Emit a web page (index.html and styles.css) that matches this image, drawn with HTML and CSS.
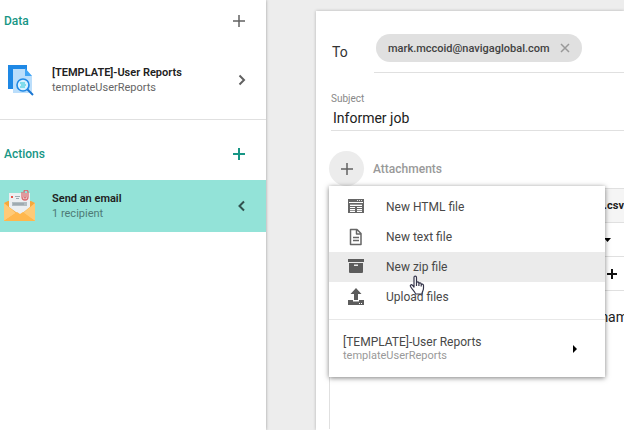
FILE: index.html
```html
<!DOCTYPE html>
<html lang="en">
<head>
<meta charset="utf-8">
<meta name="viewport" content="width=device-width, initial-scale=1">
<title>Informer job</title>
<link rel="stylesheet" href="styles.css">
</head>
<body>
<div class="app">
  <aside class="sidebar">
    <section class="section">
      <header class="section-head">
        <h2>Data</h2>
        <button class="icon-btn" type="button" aria-label="Add data"><svg width="14" height="14" viewBox="0 0 14 14"><path d="M7 1v12M1 7h12"/></svg></button>
      </header>
      <a class="item" href="#">
        <svg class="item-icon" width="32" height="32" viewBox="0 0 32 32">
          <path fill="#1e88e5" d="M4 1h19v24H4z"/>
          <path fill="#bbdefb" d="M9 5h12l7 7v17H9z"/>
          <path fill="#42a5f5" d="M21 4v8h7z"/>
          <circle cx="19" cy="21" r="6" fill="#d9f2ff" stroke="#1e88e5" stroke-width="1.600"/>
          <path d="M16 19h5M17 21h5M16 23h5" stroke="#26c6da" stroke-width="1.100"/>
          <path d="M23.500 25.500L29 31" stroke="#1976d2" stroke-width="2"/>
        </svg>
        <span class="item-text"><strong>[TEMPLATE]-User Reports</strong><small>templateUserReports</small></span>
        <svg class="chevron" width="8" height="12" viewBox="0 0 8 12"><path d="M1.500 1.500L6 6l-4.500 4.500"/></svg>
      </a>
    </section>
    <section class="section actions">
      <header class="section-head">
        <h2>Actions</h2>
        <button class="icon-btn" type="button" aria-label="Add action"><svg width="14" height="14" viewBox="0 0 14 14"><path d="M7 1v12M1 7h12"/></svg></button>
      </header>
      <a class="item selected" href="#">
        <svg class="item-icon" width="32" height="32" viewBox="0 0 32 32">
          <path fill="#f5a93c" d="M0 13l4-2h23l4 2v18H0z"/>
          <path fill="#eceff1" d="M5 3h21v14l-10 8L5 17z"/>
          <path fill="#ffca76" d="M0 13l12 10L0 31zM31 13L19 23l12 8z"/>
          <path fill="#ffb74d" d="M0 31l13-9 3 2 3-2 12 9z"/>
          <path fill="#e65349" d="M7 6h2v2H7z"/>
          <path d="M11 6.500h5M12 8.500h3" stroke="#9eabb2"/>
          <path fill="#b3bdc2" d="M8 12h15v4H8z"/>
          <path d="M9 14h11" stroke="#8b989f"/>
          <path fill="none" stroke="#dc6b70" stroke-width="1.300" d="M18 2v5a3 3 0 0 0 6 0V2a2 2 0 0 0-4 0v5a1 1 0 0 0 2 0V3"/>
        </svg>
        <span class="item-text"><strong>Send an email</strong><small>1 recipient</small></span>
        <svg class="chevron" width="8" height="12" viewBox="0 0 8 12"><path d="M6 1.500L1.500 6 6 10.500"/></svg>
      </a>
    </section>
  </aside>

  <main class="main">
    <form class="card">
      <div class="to-row">
        <span class="to-label">To</span>
        <div class="recipients">
          <span class="chip">mark.mccoid@navigaglobal.com<button type="button" aria-label="Remove recipient"><svg width="10" height="10" viewBox="0 0 10 10"><path d="M1 1l8 8M9 1L1 9"/></svg></button></span>
        </div>
      </div>
      <div class="subject">
        <label for="subject">Subject</label>
        <input id="subject" type="text" value="Informer job">
      </div>
      <div class="attachments">
        <button class="round-btn" type="button" aria-label="Add attachment"><svg width="14" height="14" viewBox="0 0 14 14"><path d="M7 1v12M1 7h12"/></svg></button>
        <span class="attachments-label">Attachments</span>
        <div class="menu" role="menu">
          <div class="menu-list">
            <button class="menu-item" type="button" role="menuitem">
              <svg width="18" height="18" viewBox="0 0 18 18"><path fill="#666" fill-rule="evenodd" d="M1 1h16v14H1zM2 4v1h14V4zM3 6v2h12V6zM3 9v1h5V9zM3 11v3h5v-3zM10 9v1h5V9zM10 11v3h5v-3z"/><path fill="#999" d="M3 6h12v1H3zM3 12h5v1H3zM10 12h5v1h-5z"/><path fill="#ddd" d="M10 2h1v1h-1zM12 2h1v1h-1zM14 2h1v1h-1z"/></svg>
              New HTML file
            </button>
            <button class="menu-item" type="button" role="menuitem">
              <svg width="18" height="18" viewBox="0 0 18 18"><path fill="none" stroke="#666" stroke-width="1.500" stroke-linejoin="round" d="M4 1.500h6l4 4v11H3.500v-15zM9.500 1.500V6H14M6 9.500h6M6 12.500h6"/></svg>
              New text file
            </button>
            <button class="menu-item active" type="button" role="menuitem">
              <svg width="18" height="18" viewBox="0 0 18 18"><path fill="#5c5c5c" fill-rule="evenodd" d="M1 1h16v3H1zM2 5h14v9a1 1 0 0 1-1 1H3a1 1 0 0 1-1-1zM7 6.500V8h4V6.500z"/></svg>
              New zip file
            </button>
            <button class="menu-item" type="button" role="menuitem">
              <svg width="18" height="18" viewBox="0 0 18 18"><path fill="#5c5c5c" fill-rule="evenodd" d="M9 0l5.500 6H11v6H7V6H3.500zM1 12h5v1.500h6V12h5v5H1zM12 15v1h1v-1zM14 15v1h1v-1z"/></svg>
              Upload files
            </button>
          </div>
          <button class="submenu" type="button" role="menuitem">
            <span><b>[TEMPLATE]-User Reports</b><small>templateUserReports</small></span>
            <svg width="4" height="8" viewBox="0 0 4 8"><path d="M0 0l4 4-4 4z"/></svg>
          </button>
          <svg class="cursor" width="16" height="20" viewBox="0 0 16 20"><path fill="#fff" stroke="#34344a" stroke-width="1.200" stroke-linejoin="round" d="M5 12V2.500C5 .6 7.500.6 7.500 2.500V8c0-1.500 2.300-1.500 2.400 0v.7c.3-1.200 2.200-1 2.300.3v.7c.4-1 2.300-.7 2.300.8V13c0 3-1.500 3.500-1.500 6H6.500c0-2-3-4-5-7.500-.8-1.500.8-2.300 1.900-1.300zM7.500 8v3M9.900 8.500V11M12.200 9.500v2"/></svg>
        </div>
      </div>
      <div class="editor">
        <div class="editor-row tab">.csv</div>
        <div class="editor-row"><svg class="caret" width="7" height="4" viewBox="0 0 7 4"><path d="M0 0h7L3.500 4z"/></svg></div>
        <div class="editor-row"><svg class="plus" width="12" height="12" viewBox="0 0 12 12"><path d="M6 1v10M1 6h10"/></svg></div>
        <div class="editor-body">nam</div>
      </div>
    </form>
  </main>
</div>
</body>
</html>
```

FILE: styles.css
```css
* { box-sizing: border-box; }

body {
  margin: 0;
  background: #ededed;
  color: #333;
  font-family: Roboto, "Liberation Sans", sans-serif;
  font-size: 12px;
}

button {
  border: 0;
  padding: 0;
  background: none;
  color: inherit;
  font: inherit;
}

svg { display: block; flex: none; }

.app {
  display: flex;
  min-height: 100vh;
  overflow: hidden;
}

/* Sidebar */
.sidebar {
  flex: 0 0 266px;
  background: #fff;
  box-shadow: 0 0 3px rgba(0, 0, 0, .35);
}

.section { border-bottom: 1px solid #e0e0e0; }
.section.actions { padding-top: 8px; border-bottom: 0; }

.section-head {
  display: flex;
  align-items: center;
  justify-content: space-between;
  height: 41px;
  padding: 0 20px 0 4px;
}

.actions .section-head { height: 52px; }

.section-head h2 {
  margin: 0;
  color: #179685;
  font-size: 12px;
  font-weight: 500;
}

.icon-btn svg,
.round-btn svg,
.chip svg,
.chevron,
.plus {
  fill: none;
  stroke: #616161;
  stroke-width: 1.5;
}

.actions .icon-btn svg { stroke: #179685; stroke-width: 2; }

.item {
  display: flex;
  align-items: center;
  height: 78px;
  padding: 0 20px 0 4px;
  color: inherit;
  text-decoration: none;
}

.item.selected { height: 52px; background: #93e3d8; }
.item-icon { margin-right: 16px; }
.item-text { flex: 1; }

.item-text strong,
.item-text small {
  display: block;
  line-height: 15px;
}

.item-text strong { color: #212121; font-size: 11px; font-weight: 600; }
.item-text small { color: #666; font-size: 11px; }
.selected .item-text small { color: #4e7b76; }
.chevron { stroke-width: 2; }
.selected .chevron { stroke: #31514e; }

/* Message card */
.main { flex: 1; min-width: 0; display: flex; padding: 11px 0 0 50px; }

.card {
  flex: 1;
  min-width: 0;
  padding: 12px 0 0 13px;
  background: #fff;
  box-shadow: 0 0 3px rgba(0, 0, 0, .25);
}

.to-row { display: flex; height: 50px; }

.to-label {
  width: 45px;
  padding: 19px 0 0 3px;
  font-size: 14px;
  line-height: 20px;
}

.recipients { flex: 1; padding: 11px 2px; border-bottom: 1px solid #e0e0e0; }

.chip {
  display: inline-flex;
  align-items: center;
  gap: 10px;
  height: 28px;
  padding: 0 12px;
  border-radius: 14px;
  background: #e0e0e0;
  color: #424242;
  font-size: 11px;
  font-weight: 500;
}

.chip svg { stroke: #999; }

.subject { display: flex; flex-direction: column; margin: 19px 0 0 2px; }
.subject label { color: #888; font-size: 10px; line-height: 14px; }

.subject input {
  width: 100%;
  height: 25px;
  padding: 0 2px;
  border: 0;
  border-bottom: 1px solid #e0e0e0;
  background: none;
  color: #212121;
  font: 14px Roboto, sans-serif;
  outline: 0;
}

.attachments {
  position: relative;
  display: flex;
  align-items: center;
  gap: 9px;
  margin-top: 20px;
}

.round-btn {
  display: grid;
  place-items: center;
  width: 35px;
  height: 35px;
  border-radius: 50%;
  background: #ececec;
}

.attachments-label { color: #999; font-weight: 500; }

/* Attachment menu */
.menu {
  position: absolute;
  top: 35px;
  left: 0;
  width: 276px;
  background: #fff;
  box-shadow: 0 1px 5px rgba(0, 0, 0, .5);
}

.menu-list { padding: 6px 0 7px; border-bottom: 1px solid #e8e8e8; }

.menu-item {
  display: flex;
  align-items: center;
  gap: 21px;
  width: 100%;
  height: 30px;
  padding: 0 18px;
  color: #484848;
}

.menu-item.active { background: #ebebeb; }

.submenu {
  display: flex;
  align-items: center;
  justify-content: space-between;
  width: 100%;
  height: 57px;
  padding: 0 28px 0 14px;
  text-align: left;
}

.submenu b,
.submenu small {
  display: block;
  font-size: 12px;
  font-weight: 400;
  line-height: 13px;
}

.submenu b { color: #484848; }
.submenu small { color: #999; font-size: 11px; }

.cursor { position: absolute; top: 89px; left: 80px; }

/* Editor behind the menu */
.editor { margin-top: 2px; border: solid #e0e0e0; border-width: 1px 0 0 1px; min-height: 241px; }

.editor-row {
  display: flex;
  align-items: center;
  justify-content: flex-end;
  height: 34px;
  padding-right: 6px;
  border-bottom: 1px solid #e0e0e0;
}

.editor-row.tab {
  padding-right: 0;
  background: #f5f5f5;
  color: #212121;
  font-size: 11px;
  font-weight: 700;
}

.caret { margin-right: 7px; }
.plus { stroke: #111; stroke-width: 2; }

.editor-body {
  margin-right: -4px;
  padding-top: 16px;
  color: #212121;
  font-size: 14px;
  line-height: 20px;
  text-align: right;
}
```
